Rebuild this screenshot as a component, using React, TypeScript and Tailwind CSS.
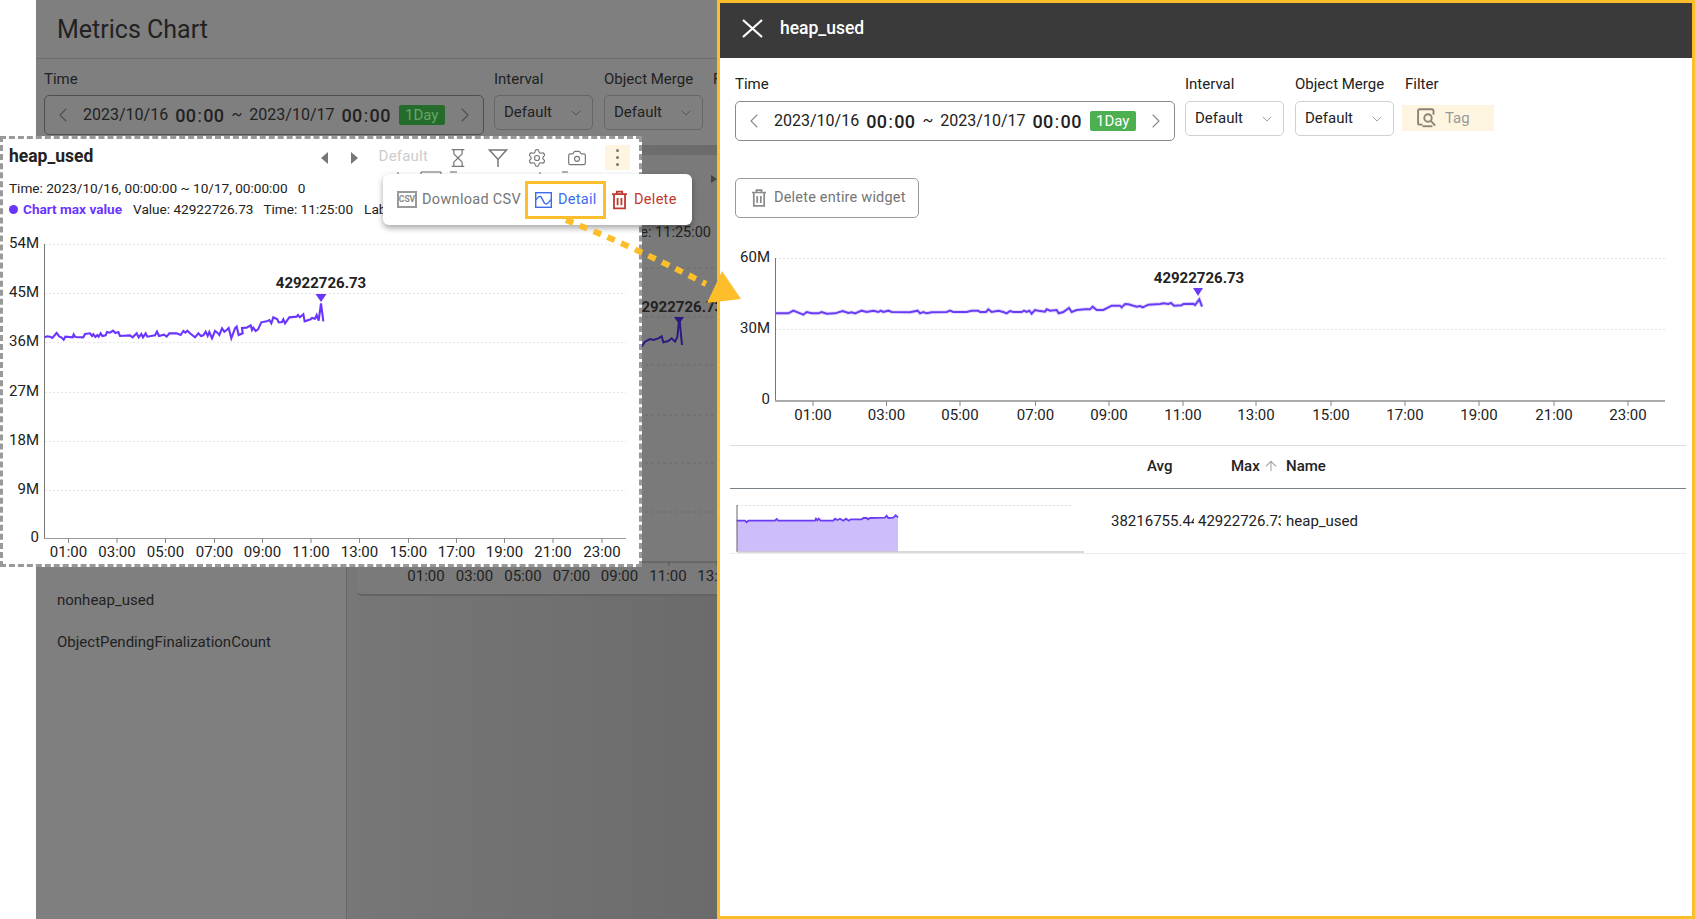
import { ChevronDown, ChevronLeft, ChevronRight, ArrowUp, Hourglass, Settings, Camera } from 'lucide-react'

const toPts = (raw: number[][], ox: number, oy: number) =>
  raw.map(([x, y]) => `${ox + x / 3},${oy + y / 3}`).join(' ')

// traced from the reference, crop coordinates (3x)
const widgetLine = [
  [14,172],[22,169],[30,170],[37,174],[50,159],[58,170],[64,172],[71,179],[76,170],[98,172],[101,163],[106,171],[130,172],[135,162],[150,160],[156,168],[160,163],[166,171],[172,165],[176,170],[182,160],[187,168],[197,166],[201,156],[210,158],[219,152],[226,159],[235,156],[240,168],[270,166],[278,172],[290,160],[296,172],[304,162],[309,172],[317,160],[322,170],[345,166],[351,155],[357,168],[372,164],[380,170],[388,160],[410,160],[422,165],[430,153],[436,158],[442,152],[450,160],[465,172],[475,160],[483,168],[490,166],[497,155],[503,168],[508,156],[516,175],[525,153],[532,158],[538,165],[546,145],[553,155],[560,150],[566,144],[574,175],[585,145],[590,140],[596,165],[608,160],[606,144],[620,143],[632,136],[636,150],[640,143],[647,153],[654,148],[664,127],[680,124],[688,120],[694,130],[700,112],[712,118],[716,127],[726,126],[730,118],[735,130],[748,112],[770,110],[774,105],[780,112],[790,103],[794,124],[812,118],[816,114],[825,116],[830,105],[836,122],[843,70],[850,124],
]
const detailLine = [
  [18,100],[55,100],[70,92],[85,98],[100,104],[110,96],[125,100],[145,100],[155,96],[170,101],[195,100],[218,93],[235,99],[245,97],[255,100],[275,92],[290,96],[310,92],[325,96],[332,92],[340,96],[355,92],[365,96],[420,97],[443,92],[450,100],[460,96],[470,100],[485,97],[530,96],[540,92],[550,96],[590,96],[605,92],[625,92],[630,96],[648,96],[655,88],[665,96],[685,92],[700,96],[710,100],[720,93],[730,96],[755,96],[762,92],[770,96],[778,92],[785,101],[795,90],[805,92],[825,95],[830,88],[840,92],[860,90],[866,100],[880,96],[897,84],[905,96],[920,90],[945,88],[960,88],[968,80],[980,90],[1000,90],[1025,77],[1050,77],[1055,82],[1065,72],[1075,73],[1100,80],[1110,78],[1118,82],[1135,74],[1170,72],[1180,70],[1195,72],[1203,69],[1212,77],[1235,76],[1240,72],[1270,71],[1275,75],[1288,58],[1296,80],
]
const sparkLine = [
  [20,62],[45,62],[50,67],[55,62],[135,62],[140,57],[145,62],[255,62],[258,56],[262,61],[266,56],[272,62],[310,62],[315,56],[322,60],[330,56],[340,62],[348,56],[356,62],[362,58],[395,58],[400,54],[410,54],[414,58],[420,54],[465,53],[470,47],[475,54],[490,53],[497,46],[504,52],
]
const backLine = [
  [125,665],[135,650],[150,642],[160,645],[175,640],[185,634],[190,652],[205,648],[215,640],[225,650],[232,636],[238,578],[246,660],
]

const hours = ['01:00','03:00','05:00','07:00','09:00','11:00','13:00','15:00','17:00','19:00','21:00','23:00']
const widgetTicks = [68.5,117,165.5,214.5,262.5,311,359.5,408.5,456.5,504.5,553,602]
const detailTicks = [813,886.5,960,1035.5,1109,1183,1256,1331,1405,1479,1554,1628]
const backTicks = [426,474.5,523,571.5,619.5,668,716]

const TrashIcon = ({ className }: { className: string }) => (
  <svg viewBox="0 0 16 18" fill="none" stroke="currentColor" strokeWidth="1.7" className={className}>
    <path d="M1 3.5h14M5.5 3V1.2h5V3M2.8 4v12.8h10.4V4M6.2 7v7M9.8 7v7" />
  </svg>
)

const Clock = () => (
  <span className="text-[18px] font-medium tracking-[0.4px]">
    00<span className="px-[1px] font-normal">:</span>00
  </span>
)

const DateRange = ({ dim }: { dim?: boolean }) => (
  <div className={`flex h-[40px] w-[440px] items-center rounded-[5px] border pl-[6px] ${dim ? 'border-[#4f4f4f]' : 'border-[#8a8a8a]'}`}>
    <ChevronLeft size={24} strokeWidth={1.1} className={dim ? 'text-[#4f4f4f]' : 'text-[#8a8a8a]'} />
    <span className="ml-[8px] flex items-center gap-[7px] text-[16px] whitespace-nowrap text-[#222]">
      2023/10/16
      <Clock />
      <span>~</span>
      2023/10/17
      <Clock />
    </span>
    <span className={`ml-[8px] flex h-[20px] w-[46px] items-center justify-center rounded-[2px] text-[15px] ${dim ? 'bg-[#256b2c] text-[#63a866]' : 'bg-[#4caf50] text-white'}`}>
      1Day
    </span>
    <ChevronRight size={24} strokeWidth={1.1} className={`ml-[8px] ${dim ? 'text-[#4f4f4f]' : 'text-[#8a8a8a]'}`} />
  </div>
)

const SelectBox = ({ dim }: { dim?: boolean }) => (
  <div className={`flex h-[35px] w-[99px] items-center justify-between rounded-[5px] border pl-[9px] pr-[8px] text-[15px] ${dim ? 'border-[#666] text-[#222]' : 'border-[#d0d0d0] text-[#222]'}`}>
    Default
    <ChevronDown size={16} strokeWidth={1.2} className={dim ? 'text-[#4a4a4a]' : 'text-[#8a8a8a]'} />
  </div>
)

const BackPage = () => (
  <div className="flex h-full w-[681px] shrink-0 flex-col overflow-hidden bg-[#7f7f7f] text-[#222]">
    <div className="flex h-[59px] shrink-0 items-center border-b border-[#6e6e6e] pl-[21px] pt-[2px] text-[25px]">Metrics Chart</div>
    <div className="flex h-[86px] shrink-0 gap-[10px] pl-[8px] pt-[10px]">
      <div>
        <div className="mb-[6px] h-[20px] text-[15px] leading-[20px]">Time</div>
        <DateRange dim />
      </div>
      <div>
        <div className="mb-[6px] h-[20px] text-[15px] leading-[20px]">Interval</div>
        <SelectBox dim />
      </div>
      <div className="ml-[1px]">
        <div className="mb-[6px] h-[20px] text-[15px] leading-[20px] whitespace-nowrap">Object Merge</div>
        <SelectBox dim />
      </div>
      <div className="h-[20px] text-[15px] leading-[20px]">Filter</div>
    </div>
    <div className="flex min-h-0 flex-1">
      <div className="w-[311px] shrink-0 border-r border-[#686868] pl-[21px] pt-[444px] text-[15px]">
        <div className="h-[42px]">nonheap_used</div>
        <div className="h-[42px]">ObjectPendingFinalizationCount</div>
      </div>
      <div className="flex-1 bg-gradient-to-r from-[#777777] to-[#6b6b6b] pl-[10px] pt-[10px]">
        <div className="h-[441px] w-[360px] rounded-bl-[5px] border-b-2 border-[#646464] bg-[#7a7a7a]">
          <svg viewBox="357 155 360 441" className="block h-[441px] w-[360px]" fontFamily="Roboto, sans-serif" fill="#222">
            <polygon points="711,175 717,179 711,183" fill="#444" />
            <text x="711" y="237" textAnchor="end" fontSize="14.5">Time: 11:25:00</text>
            {[268, 317, 365, 415, 463, 512].map((y) => (
              <line key={y} x1="357" x2="717" y1={y} y2={y} stroke="#6a6a6a" strokeDasharray="3 3" />
            ))}
            <line x1="357" x2="717" y1="562" y2="562" stroke="#555" />
            <text x="678" y="312" textAnchor="middle" fontSize="15" fontWeight="700">42922726.73</text>
            <polygon points="674,317 684,317 679,324" fill="#2c1a82" />
            <polyline points={toPts(backLine, 600, 125)} fill="none" stroke="#2c1a82" strokeWidth="2" />
            {backTicks.map((x, i) => (
              <g key={x}>
                <line x1={x + 1} x2={x + 1} y1="562" y2="566" stroke="#555" />
                <text x={x} y="581" textAnchor="middle" fontSize="15">{hours[i]}</text>
              </g>
            ))}
          </svg>
        </div>
      </div>
    </div>
  </div>
)

const Drawer = () => (
  <div className="flex h-full flex-1 flex-col border-3 border-[#fcbf2b] bg-white text-[#222]">
    <div className="flex h-[55px] shrink-0 items-center bg-[#3a3a3a] pb-[5px] pl-[22px] text-[17.5px] font-medium text-white">
      <svg width="21" height="19" viewBox="0 0 21 19" fill="none" stroke="white" strokeWidth="2.2">
        <path d="M1 1l19 17M20 1L1 18" />
      </svg>
      <span className="ml-[17px]">heap_used</span>
    </div>
    <div className="flex shrink-0 gap-[10px] pl-[15px] pt-[16px]">
      <div>
        <div className="mb-[7px] h-[20px] text-[15px] leading-[20px]">Time</div>
        <DateRange />
      </div>
      <div>
        <div className="mb-[7px] h-[20px] text-[15px] leading-[20px]">Interval</div>
        <SelectBox />
      </div>
      <div className="ml-[1px]">
        <div className="mb-[7px] h-[20px] text-[15px] leading-[20px] whitespace-nowrap">Object Merge</div>
        <SelectBox />
      </div>
      <div className="-ml-[2px]">
        <div className="mb-[11px] h-[20px] pl-[3px] text-[15px] leading-[20px]">Filter</div>
        <div className="flex h-[26px] w-[92px] items-center gap-[6px] bg-[#fdf5e0] pl-[15px] text-[15px] text-[#999]">
          <svg width="22" height="20" viewBox="0 0 20 18" fill="none" stroke="#8a8272" strokeWidth="1.7">
            <path d="M5 15H2.5A1.5 1.5 0 0 1 1 13.5V2.5A1.5 1.5 0 0 1 2.5 1h11A1.5 1.5 0 0 1 15 2.5V6" />
            <circle cx="10" cy="9" r="3.4" />
            <path d="M12.6 11.6L16.5 16" />
            <path d="M5 16.5h9" />
          </svg>
          Tag
        </div>
      </div>
    </div>
    <div className="flex shrink-0 pl-[15px] pt-[37px]">
      <div className="flex h-[40px] w-[184px] items-center gap-[7px] rounded-[5px] border border-[#999] pb-[1px] pl-[15px] text-[14.5px] tracking-[0.2px] text-[#757575]">
        <TrashIcon className="h-[20px] w-[16px] text-[#8a8a8a]" />
        Delete entire widget
      </div>
    </div>
    <svg viewBox="720 218 972 227" className="block h-[227px] w-[972px] shrink-0" fontFamily="Roboto, sans-serif" fill="#222">
      <line x1="775" x2="1665" y1="258.5" y2="258.5" stroke="#e3e3e3" strokeDasharray="2 2" />
      <line x1="775" x2="1665" y1="329.5" y2="329.5" stroke="#e3e3e3" strokeDasharray="2 2" />
      <text x="770" y="262" textAnchor="end" fontSize="15">60M</text>
      <text x="770" y="333" textAnchor="end" fontSize="15">30M</text>
      <text x="770" y="404" textAnchor="end" fontSize="15">0</text>
      <line x1="775.5" x2="775.5" y1="258" y2="401" stroke="#777" />
      <line x1="775" x2="1665" y1="401" y2="401" stroke="#aaa" strokeWidth="2" />
      {detailTicks.map((x, i) => (
        <g key={x}>
          <line x1={x} x2={x} y1="401" y2="406" stroke="#888" />
          <text x={x} y="420" textAnchor="middle" fontSize="15">{hours[i]}</text>
        </g>
      ))}
      <polyline points={toPts(detailLine, 770, 280)} fill="none" stroke="#c9bdfb" strokeWidth="4" opacity="0.5" />
      <polyline points={toPts(detailLine, 770, 280)} fill="none" stroke="#6a3df5" strokeWidth="2" />
      <polygon points="1193,288 1203,288 1198,296" fill="#6a3df5" />
      <text x="1199" y="283" textAnchor="middle" fontSize="15" fontWeight="700">42922726.73</text>
    </svg>
    <div className="ml-[10px] mr-[6px] shrink-0 border-t border-[#dcdcdc]">
      <div className="grid h-[43px] grid-cols-[380px_88px_88px_1fr] items-center border-b border-[#7a8288] pb-[2px] text-[15px] font-medium">
        <div />
        <div className="pl-[37px]">Avg</div>
        <div className="flex items-center pl-[33px]">
          Max
          <ArrowUp size={16} strokeWidth={1.7} className="ml-[3px] text-[#aaa]" />
        </div>
        <div>Name</div>
      </div>
      <div className="grid h-[65px] grid-cols-[380px_88px_88px_1fr] items-center border-b border-[#eeeeee] text-[15px]">
        <svg viewBox="730 489 380 64" className="block h-[64px] w-[380px]">
          <line x1="737" x2="1072" y1="505.5" y2="505.5" stroke="#dddddd" strokeDasharray="2 2" />
          <polygon points={`737,552 ${toPts(sparkLine, 730, 500)} 898,552`} fill="#cdbdfb" />
          <polyline points={toPts(sparkLine, 730, 500)} fill="none" stroke="#6a3df5" strokeWidth="1.8" />
          <line x1="737" x2="737" y1="505" y2="552" stroke="#666" />
          <line x1="737" x2="1084" y1="552" y2="552" stroke="#cccccc" strokeWidth="1.5" />
        </svg>
        <div className="w-[84px] overflow-hidden whitespace-nowrap pl-[1px]">38216755.44</div>
        <div className="w-[83px] overflow-hidden whitespace-nowrap">42922726.73</div>
        <div>heap_used</div>
      </div>
    </div>
  </div>
)

const WidgetOverlay = () => (
  <div className="absolute left-0 top-[136px] flex h-[431px] w-[642px] flex-col border-3 border-dashed border-[#999] bg-white text-[#222]">
    <div className="mt-[6px] flex h-[25px] shrink-0 items-center pl-[6px] pr-[9px]">
      <span className="pb-[2px] text-[17.5px] font-bold">heap_used</span>
      <svg width="7" height="12" viewBox="0 0 7 12" className="ml-auto"><polygon points="7,0 7,12 0,6" fill="#777" /></svg>
      <svg width="7" height="12" viewBox="0 0 7 12" className="ml-[23px]"><polygon points="0,0 0,12 7,6" fill="#777" /></svg>
      <span className="ml-[21px] pb-[2px] text-[15px] tracking-[0.2px] text-[#cccccc]">Default</span>
      <Hourglass size={20} strokeWidth={1.5} className="ml-[20px] text-[#777]" />
      <svg width="20" height="20" viewBox="0 0 20 20" fill="none" stroke="#777" strokeWidth="1.5" className="ml-[20px]">
        <path d="M1.5 2h17L10 11.5zM10 11.5V19" />
      </svg>
      <Settings size={20} strokeWidth={1.4} className="ml-[19px] text-[#777]" />
      <Camera size={20} strokeWidth={1.4} className="ml-[20px] text-[#777]" />
      <div className="ml-[18px] flex h-[25px] w-[25px] flex-col items-center justify-center gap-[4px] bg-[#fdf5e0]">
        <span className="h-[3px] w-[3px] rounded-full bg-[#777]" />
        <span className="h-[3px] w-[3px] rounded-full bg-[#777]" />
        <span className="h-[3px] w-[3px] rounded-full bg-[#777]" />
      </div>
    </div>
    <div className="mt-[8px] h-[20px] shrink-0 whitespace-pre pl-[6px] text-[13.6px] leading-[20px]">Time: 2023/10/16, 00:00:00 ~ 10/17, 00:00:00   0</div>
    <div className="mt-[1px] flex h-[20px] shrink-0 items-center whitespace-nowrap pl-[6px] text-[13.6px]">
      <span className="h-[9px] w-[9px] rounded-full bg-[#6a35ff]" />
      <span className="ml-[5px] font-bold text-[#6a35ff]">Chart max value</span>
      <span className="ml-[11px]">Value: 42922726.73</span>
      <span className="ml-[10px]">Time: 11:25:00</span>
      <span className="ml-[11px]">Label: heap_used</span>
    </div>
    <svg viewBox="3 229 636 335" className="mt-[10px] block h-[335px] w-[636px] shrink-0" fontFamily="Roboto, sans-serif" fill="#222">
      {[['54M',244],['45M',293],['36M',342],['27M',392],['18M',441],['9M',490]].map(([label, y]) => (
        <g key={label}>
          <line x1="45" x2="626" y1={Number(y) + 0.5} y2={Number(y) + 0.5} stroke="#e6e6e6" strokeDasharray="2 2" />
          <text x="39" y={Number(y) + 4} textAnchor="end" fontSize="15">{label}</text>
        </g>
      ))}
      <text x="39" y="542" textAnchor="end" fontSize="15">0</text>
      <line x1="44.5" x2="44.5" y1="244" y2="538" stroke="#777" />
      <line x1="44" x2="626" y1="538.5" y2="538.5" stroke="#999" />
      {widgetTicks.map((x, i) => (
        <g key={x}>
          <line x1={x} x2={x} y1="538" y2="543" stroke="#888" />
          <text x={x} y="557" textAnchor="middle" fontSize="15">{hours[i]}</text>
        </g>
      ))}
      <polyline points={toPts(widgetLine, 40, 280)} fill="none" stroke="#6a35ff" strokeWidth="2.1" />
      <polygon points="315.5,294 326.5,294 321,302" fill="#6a35ff" />
      <text x="321" y="288" textAnchor="middle" fontSize="15" fontWeight="700">42922726.73</text>
    </svg>
  </div>
)

const ActionPopup = () => (
  <div className="absolute left-[383px] top-[174px] flex h-[51px] w-[309px] items-center rounded-[6px] bg-white pl-[14px] text-[14.5px] tracking-[0.3px] shadow-[0_3px_6px_rgba(0,0,0,0.35)]">
    <span className="flex h-[17px] w-[20px] shrink-0 items-center justify-center border-2 border-[#999] text-[8.5px] font-bold leading-none tracking-normal text-[#888]">CSV</span>
    <span className="ml-[5px] w-[99px] shrink-0 whitespace-nowrap text-[#757575]">Download CSV</span>
    <div className="ml-[4px] flex h-[38px] w-[81px] shrink-0 items-center border-3 border-[#fcbf2b] pl-[7px] text-[#3b6cf0]">
      <svg width="17" height="16" viewBox="0 0 17 16" fill="none" stroke="#3b6cf0" strokeWidth="1.4">
        <rect x="0.7" y="0.7" width="15.6" height="14.6" />
        <path d="M1 8c1.5-2.5 3-4 4.5-3.5S8 10 10 11.5s3-.5 6-4" />
      </svg>
      <span className="ml-[6px]">Detail</span>
    </div>
    <TrashIcon className="ml-[5px] h-[20px] w-[17px] shrink-0 text-[#c0392f]" />
    <span className="ml-[6px] text-[#c6352c]">Delete</span>
  </div>
)

export default function App() {
  return (
    <div className="relative flex h-[919px] w-[1695px] overflow-hidden bg-white font-[Roboto,sans-serif]">
      <div className="w-[36px] shrink-0" />
      <BackPage />
      <Drawer />
      <WidgetOverlay />
      {/* toolbar of the hidden widget, peeking out above the popup */}
      <svg width="180" height="4" viewBox="0 0 180 4" fill="none" stroke="#666" className="absolute left-[390px] top-[171px]">
        <path d="M8 1v3M31 1h20M31 1v3M51 1v3M60 1h7M150 1v3M172 1h6" />
      </svg>
      <ActionPopup />
      {/* annotation arrow from the Detail button to the drawer */}
      <svg viewBox="0 0 1695 919" className="pointer-events-none absolute left-0 top-0 h-[919px] w-[1695px]">
        <path d="M566 220 Q 630 245 706 284" fill="none" stroke="#fcbf2b" strokeWidth="6" strokeDasharray="8 7" />
        <polygon points="722,271 741,299 707,303" fill="#fcbf2b" />
      </svg>
    </div>
  )
}
